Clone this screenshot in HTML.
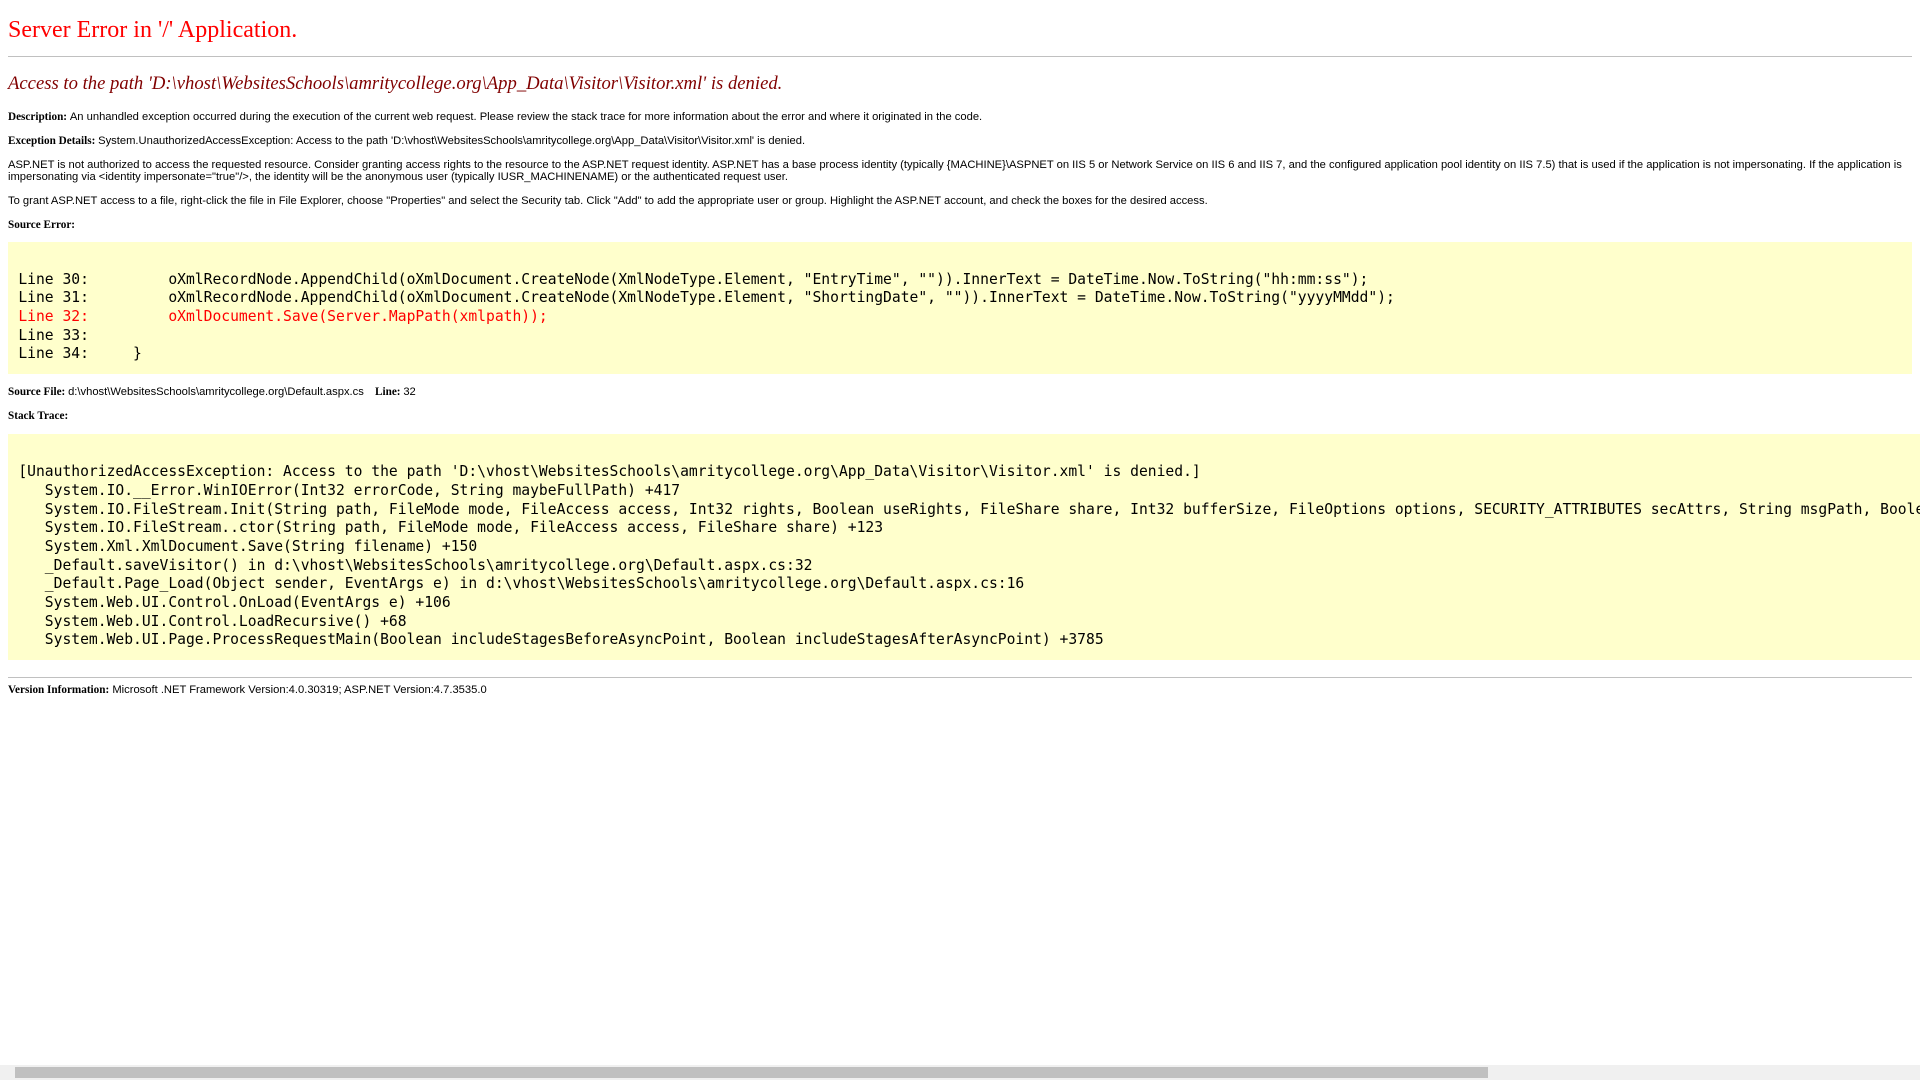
<!DOCTYPE html>
<html><head><meta charset="utf-8"><title>Access denied</title>
<style>
html{overflow:hidden;margin:0;padding:0}
body{margin:8px;font-family:"Liberation Sans",sans-serif;font-weight:normal;font-size:11.2px;color:black;background:#fff}
p{font-family:"Liberation Sans",sans-serif;font-weight:normal;color:black;margin:12px 0}
b{font-family:"Liberation Serif",serif;font-weight:bold;color:black}
h1{font-family:"Liberation Serif",serif;font-weight:normal;font-size:24px;color:red;margin:17px 0 16px 0}
h2{font-family:"Liberation Serif",serif;font-weight:normal;font-size:18.67px;color:maroon;margin:15.5px 0}
pre{font-family:"DejaVu Sans Mono",monospace;font-size:14.67px;margin:0;padding:0.5em;line-height:18.67px}
hr{border:0;border-top:1px solid silver;height:0;margin:8px 0;}
h1 hr{margin-top:12px}
.sb{position:fixed;left:0;bottom:0;width:1920px;height:15px;background:#f0f0f0}
.th{position:absolute;left:15px;top:2px;width:1473px;height:11px;background:#c0c0c0}
</style></head><body>
<span><h1>Server Error in '/' Application.<hr width="100%" size="1" color="silver"></h1>
<h2><i>Access to the path 'D:\vhost\WebsitesSchools\amritycollege.org\App_Data\Visitor\Visitor.xml' is denied.</i></h2></span>
<p><b>Description: </b>An unhandled exception occurred during the execution of the current web request. Please review the stack trace for more information about the error and where it originated in the code.</p>
<p><b>Exception Details: </b>System.UnauthorizedAccessException: Access to the path 'D:\vhost\WebsitesSchools\amritycollege.org\App_Data\Visitor\Visitor.xml' is denied.</p>
<p>ASP.NET is not authorized to access the requested resource. Consider granting access rights to the resource to the ASP.NET request identity. ASP.NET has a base process identity (typically {MACHINE}\ASPNET on IIS 5 or Network Service on IIS 6 and IIS 7, and the configured application pool identity on IIS 7.5) that is used if the application is not impersonating. If the application is impersonating via &lt;identity impersonate="true"/&gt;, the identity will be the anonymous user (typically IUSR_MACHINENAME) or the authenticated request user.</p>
<p>To grant ASP.NET access to a file, right-click the file in File Explorer, choose "Properties" and select the Security tab. Click "Add" to add the appropriate user or group. Highlight the ASP.NET account, and check the boxes for the desired access.</p>
<p style="margin-bottom:11px"><b>Source Error:</b></p>
<table width="100%" bgcolor="#ffffcc" style="width:1904px"><tr><td><pre>

Line 30:         oXmlRecordNode.AppendChild(oXmlDocument.CreateNode(XmlNodeType.Element, "EntryTime", "")).InnerText = DateTime.Now.ToString("hh:mm:ss");
Line 31:         oXmlRecordNode.AppendChild(oXmlDocument.CreateNode(XmlNodeType.Element, "ShortingDate", "")).InnerText = DateTime.Now.ToString("yyyyMMdd");
<font color="red">Line 32:         oXmlDocument.Save(Server.MapPath(xmlpath));
</font>Line 33: 
Line 34:     }</pre></td></tr></table>
<p style="margin-top:12px"><b>Source File: </b> d:\vhost\WebsitesSchools\amritycollege.org\Default.aspx.cs<b> &nbsp;&nbsp; Line: </b> 32</p>
<p><b>Stack Trace:</b></p>
<table width="100%" bgcolor="#ffffcc" style="width:2460px"><tr><td><pre>

[UnauthorizedAccessException: Access to the path 'D:\vhost\WebsitesSchools\amritycollege.org\App_Data\Visitor\Visitor.xml' is denied.]
   System.IO.__Error.WinIOError(Int32 errorCode, String maybeFullPath) +417
   System.IO.FileStream.Init(String path, FileMode mode, FileAccess access, Int32 rights, Boolean useRights, FileShare share, Int32 bufferSize, FileOptions options, SECURITY_ATTRIBUTES secAttrs, String msgPath, Boolean bFromProxy) +1286
   System.IO.FileStream..ctor(String path, FileMode mode, FileAccess access, FileShare share) +123
   System.Xml.XmlDocument.Save(String filename) +150
   _Default.saveVisitor() in d:\vhost\WebsitesSchools\amritycollege.org\Default.aspx.cs:32
   _Default.Page_Load(Object sender, EventArgs e) in d:\vhost\WebsitesSchools\amritycollege.org\Default.aspx.cs:16
   System.Web.UI.Control.OnLoad(EventArgs e) +106
   System.Web.UI.Control.LoadRecursive() +68
   System.Web.UI.Page.ProcessRequestMain(Boolean includeStagesBeforeAsyncPoint, Boolean includeStagesAfterAsyncPoint) +3785
</pre></td></tr></table>
<hr width="100%" size="1" color="silver" style="width:1904px;margin-top:17px;margin-bottom:6px">
<b>Version Information:</b>&nbsp;<span style="font-family:'Liberation Sans',sans-serif">Microsoft .NET Framework Version:4.0.30319; ASP.NET Version:4.7.3535.0</span>
<div class="sb"><div class="th"></div></div>
</body></html>
